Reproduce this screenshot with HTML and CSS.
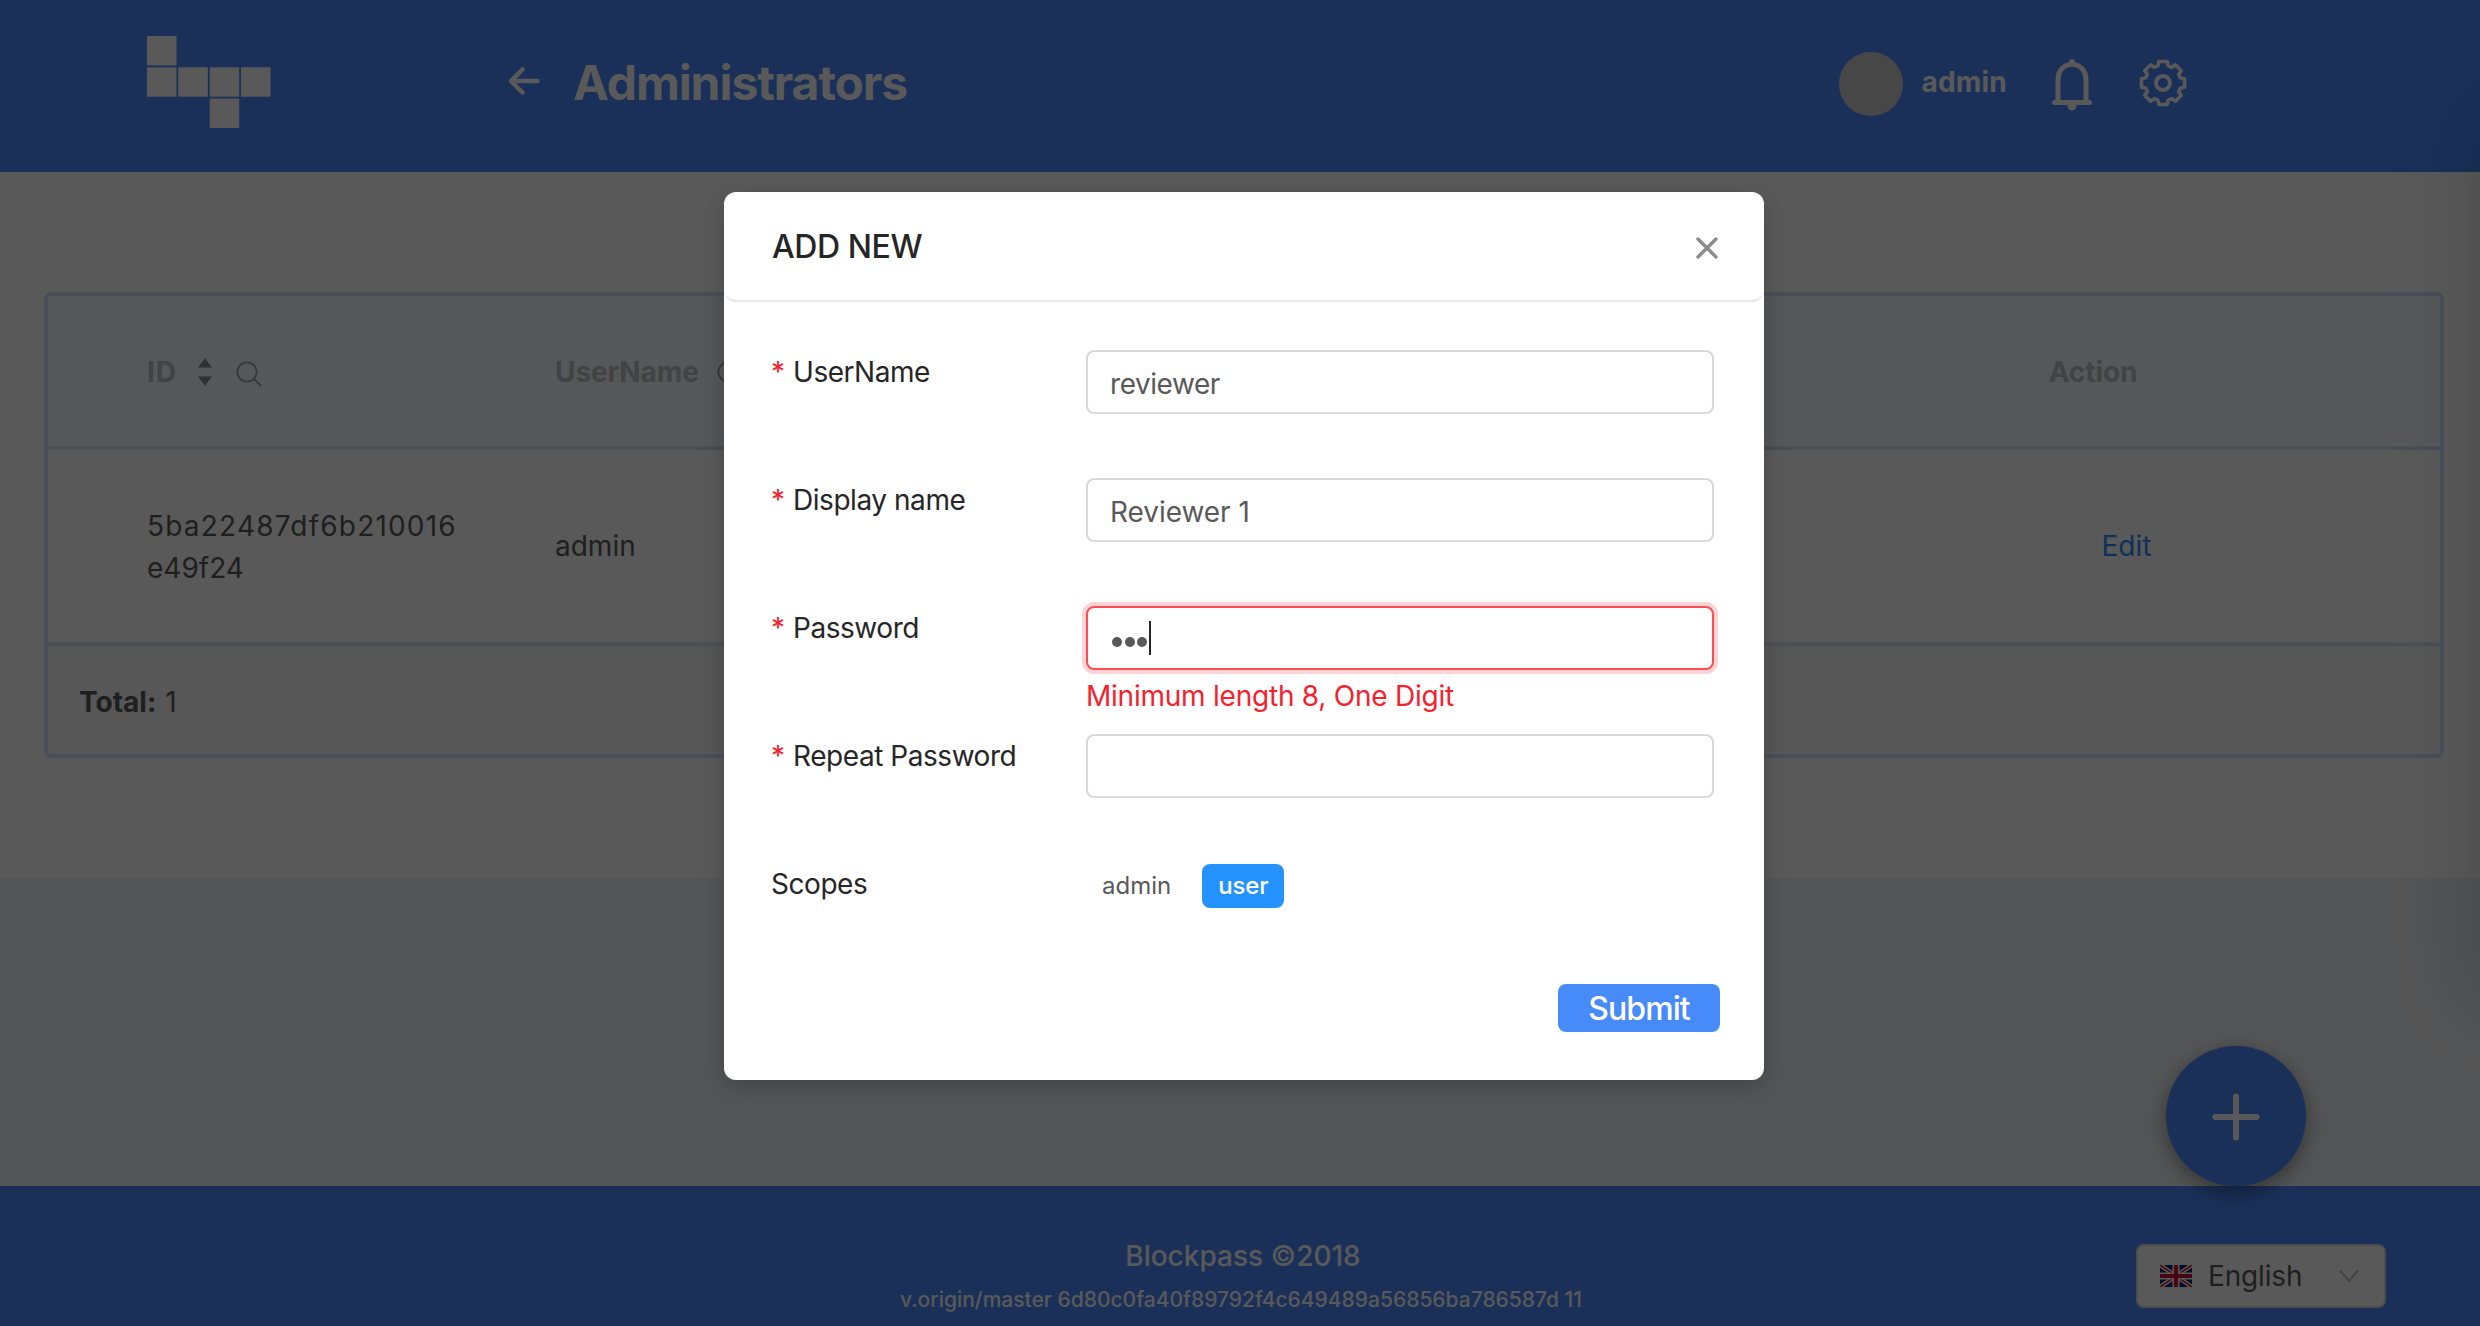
FILE: index.html
```
<!DOCTYPE html>
<html lang="en">
<head>
<meta charset="utf-8">
<title>Administrators</title>
<link rel="stylesheet" href="styles.css">
</head>
<body>
<div class="layout">
  <header class="header">
    <svg class="logo" width="124" height="92" viewBox="0 0 124 92" fill="#fff">
      <path d="M0 0h29.500v29.500H0zM0 31.300h29.500v29.500H0zM31.300 31.300h29.500v29.500H31.300zM62.700 31.300h29.500v29.500H62.700zM94 31.300h29.500v29.500H94zM62.700 62.500h29.500v29.500H62.700z"/>
    </svg>
    <svg class="back" width="32" height="28" viewBox="0 0 32 28" fill="none" stroke="#fff" stroke-width="4.500" stroke-linecap="round" stroke-linejoin="round">
      <path d="M14.500 2.500L3 14l11.500 11.500M4 14h25.500"/>
    </svg>
    <h1 class="page-title">Administrators</h1>
    <div class="user">
      <span class="avatar"></span>
      <span class="user-name">admin</span>
      <svg class="bell" width="40" height="52" viewBox="0 0 40 52">
        <path d="M6 42V21C6 11 12 5.500 20 5.500S34 11 34 21V42" fill="none" stroke="#fff" stroke-width="5"/>
        <path d="M2.500 43.500h35" stroke="#fff" stroke-width="5" stroke-linecap="round"/>
        <path d="M17 5V3a3 3 0 0 1 6 0v2zM15.500 45h9v2a4.500 4.500 0 0 1-9 0z" fill="#fff"/>
      </svg>
      <svg class="gear" width="48" height="48" viewBox="-24 -24 48 48" fill="none" stroke="#fff" stroke-width="3.600" stroke-linejoin="round">
        <circle r="7" stroke-width="4"/>
        <path d="M-4.200 -21.500H4.200L5.200 -17.200L8.800 -15.700L12.400 -18.200L18.200 -12.400L15.700 -8.800L17.200 -5.200L21.500 -4.200V4.200L17.200 5.200L15.700 8.800L18.200 12.400L12.400 18.200L8.800 15.700L5.200 17.200L4.200 21.500H-4.200L-5.200 17.200L-8.800 15.700L-12.400 18.200L-18.200 12.400L-15.700 8.800L-17.200 5.200L-21.500 4.200V-4.200L-17.200 -5.200L-15.700 -8.800L-18.200 -12.400L-12.400 -18.200L-8.800 -15.700L-5.200 -17.200Z"/>
      </svg>
    </div>
  </header>

  <main class="content">
    <section class="table">
      <div class="row head">
        <div class="cell id"><span class="id-title">ID</span>
          <svg class="sorter" width="14" height="28" viewBox="0 0 14 28" fill="#85888c"><path d="M7 0l7 9.500H0zM7 28l7-9.500H0z"/></svg>
          <svg class="search" width="26" height="26" viewBox="0 0 26 26" fill="none" stroke="#9a9da1" stroke-width="1.800"><circle cx="11" cy="11" r="9.700"/><path d="M18 18l7 7"/></svg>
        </div>
        <div class="cell name"><span>UserName</span>
          <svg class="search" width="26" height="26" viewBox="0 0 26 26" fill="none" stroke="#9a9da1" stroke-width="1.800"><circle cx="11" cy="11" r="9.700"/><path d="M18 18l7 7"/></svg>
        </div>
        <div class="cell action">Action</div>
      </div>
      <div class="row item">
        <div class="cell id"><div><span class="hash">5ba22487df6b210016</span><br>e49f24</div></div>
        <div class="cell name">admin</div>
        <div class="cell action"><a class="edit">Edit</a></div>
      </div>
      <div class="total"><b>Total:</b> 1</div>
    </section>
  </main>

  <div class="spacer"></div>

  <footer class="footer">
    <div class="copy">
      <div class="brand">Blockpass ©2018</div>
      <div class="version">v.origin/master 6d80c0fa40f89792f4c649489a56856ba786587d 11</div>
    </div>
    <div class="language">
      <svg class="flag" width="32" height="22" viewBox="0 0 32 22">
        <rect width="32" height="22" fill="#00247d"/>
        <path d="M0 0L32 22M32 0L0 22" stroke="#fff" stroke-width="4.400"/>
        <path d="M0 0L32 22M32 0L0 22" stroke="#cf142b" stroke-width="1.600"/>
        <path d="M16 0V22M0 11H32" stroke="#fff" stroke-width="7"/>
        <path d="M16 0V22M0 11H32" stroke="#cf142b" stroke-width="4"/>
      </svg>
      <span class="language-name">English</span>
      <svg width="20" height="14" viewBox="0 0 20 14" fill="none" stroke="#bfbfbf" stroke-width="2"><path d="M1 1.500l9 10.500 9-10.500"/></svg>
    </div>
  </footer>
</div>

<button class="fab">
  <svg width="48" height="48" viewBox="0 0 48 48" stroke="#fff" stroke-width="6" stroke-linecap="round"><path d="M24 3.500V44.500M3.500 24H44.500"/></svg>
</button>

<div class="drawer"></div>
<div class="mask"></div>

<div class="modal">
  <div class="modal-header">
    <span>ADD NEW</span>
    <svg width="22" height="22" viewBox="0 0 22 22" stroke="#8c8c8c" stroke-width="3.400" stroke-linecap="round"><path d="M2 2l18 18M20 2L2 20"/></svg>
  </div>
  <div class="modal-body">
    <div class="field"><label class="label required">UserName</label><div class="input">reviewer</div></div>
    <div class="field"><label class="label required">Display name</label><div class="input wide">Reviewer 1</div></div>
    <div class="field"><label class="label required">Password</label>
      <div>
        <div class="input error"><i class="dot"></i><i class="dot"></i><i class="dot"></i><i class="caret"></i></div>
        <div class="message">Minimum length 8, One Digit</div>
      </div>
    </div>
    <div class="field"><label class="label required">Repeat Password</label><div class="input"></div></div>
    <div class="field scopes"><label class="label">Scopes</label>
      <div class="chips"><span class="chip">admin</span><span class="chip checked">user</span></div>
    </div>
    <div class="actions"><button class="submit">Submit</button></div>
  </div>
</div>
</body>
</html>
```
FILE: styles.css
```
* { box-sizing: border-box; }
body {
  margin: 0;
  position: relative;
  height: 1326px;
  overflow: hidden;
  font: 400 28px/42px Inter, "Open Sans", sans-serif;
  color: #595959;
  background: #f0f2f5;
}
svg { display: block; flex: none; }
button { border: 0; padding: 0; font-family: inherit; }

.layout { display: flex; flex-direction: column; height: 1326px; }

/* header */
.header {
  display: flex;
  align-items: center;
  height: 172px;
  padding: 0 293px 8px 147px;
  background: #4a89fb;
  color: #fff;
}
.back { margin-left: 237px; margin-bottom: 2px; }
.page-title {
  margin: 2px 0 0 33px;
  font-size: 48px;
  line-height: 60px;
  font-weight: 700;
  letter-spacing: -1.05px;
}
.user { display: flex; align-items: center; margin-left: auto; }
.avatar { width: 64px; height: 64px; margin-top: 4px; border-radius: 50%; background: #ccc; }
.user-name { margin-left: 19px; font-weight: 700; letter-spacing: .2px; }
.bell { margin: 6px 0 0 45px; }
.gear { margin: 1px 0 0 47px; }

/* table */
.content { height: 706px; padding: 120px 36px 0 44px; background: #fff; }
.table { border: 4px solid #d0dfff; border-radius: 8px; overflow: hidden; }
.row { display: flex; }
.cell { display: flex; align-items: center; }
.cell.id { width: 406px; padding-left: 99px; }
.cell.name { flex: 1; padding-left: 101px; }
.cell.action { width: 622px; justify-content: center; }
.head {
  height: 154px;
  padding-top: 2px;
  border-bottom: 4px solid #d0dfff;
  background: #f6fafd;
  color: #bcbfc3;
  font-weight: 700;
  letter-spacing: -.1px;
}
.item { height: 194px; border-bottom: 2px solid #e8e8e8; }
.item .id { padding-top: 2px; }
.id-title { letter-spacing: 1px; }
.sorter { margin: 0 0 0 21px; }
.search { margin: 3px 0 0 24px; }
.cell.name .search { margin-left: 18px; }
.hash { letter-spacing: 1.2px; }
.head .action { padding-right: 72px; }
.item .action { padding-right: 0; }
.edit { margin-right: 5px; color: #2a8cff; }
.total {
  height: 110px;
  padding: 35px 0 0 31px;
  border-top: 2px solid #d0dfff;
  background: #fafafa;
}
.total b { margin-right: 1px; }

.spacer { flex: 1; }

/* footer */
.footer {
  display: flex;
  align-items: flex-start;
  height: 140px;
  padding-right: 94px;
  background: #4a89fb;
  color: #fff;
}
.copy { flex: 1; padding: 49px 0 0 346px; text-align: center; font-weight: 500; letter-spacing: 0; }
.brand { position: relative; left: 2px; }
.version { margin-top: 2px; font-size: 21px; letter-spacing: 0; line-height: 42px; }
.language {
  display: flex;
  align-items: center;
  width: 250px;
  height: 64px;
  margin-top: 58px;
  padding: 0 25px 0 22px;
  border: 2px solid #d9d9d9;
  border-radius: 8px;
  background: #fff;
  color: #595959;
}
.language-name { flex: 1; margin-left: 16px; letter-spacing: -.15px; }

.fab {
  position: absolute;
  left: 2166px;
  top: 1046px;
  display: grid;
  place-items: center;
  width: 140px;
  height: 140px;
  padding-top: 2px;
  border-radius: 50%;
  background: #4a89fb;
  box-shadow: 0 6px 20px rgba(0, 0, 0, .4);
}

/* closed drawer, parked off the right edge */
.drawer {
  position: absolute;
  left: 2480px;
  top: 110px;
  width: 100px;
  height: 890px;
  box-shadow: 0 0 90px rgba(0, 0, 0, .18);
}
.mask { position: absolute; inset: 0; background: rgba(0, 0, 0, .65); }

/* dialog */
.modal {
  position: absolute;
  left: 724px;
  top: 192px;
  width: 1040px;
  height: 888px;
  border-radius: 12px;
  background: #fff;
  box-shadow: 0 8px 24px rgba(0, 0, 0, .2);
  color: #262626;
}
.modal-header {
  display: flex;
  align-items: center;
  justify-content: space-between;
  height: 110px;
  padding: 2px 46px 0 48px;
  border-bottom: 2px solid #e8e8e8;
  border-radius: 12px;
  font-size: 32px;
  font-weight: 500;
  letter-spacing: -.4px;
}
.modal-header svg { margin-top: 2px; }
.modal-body { padding: 48px 44px 0 47px; }
.field { display: grid; grid-template-columns: 315px 628px; align-items: start; height: 128px; }
.label { margin-top: 1px; letter-spacing: -.45px; }
.required::before {
  content: "*";
  display: inline-block;
  width: 22px;
  color: #f5222d;
  font-size: 28px;
  letter-spacing: 0;
}
.input {
  display: flex;
  align-items: center;
  height: 64px;
  padding: 4px 22px 0;
  border: 2px solid #d9d9d9;
  border-radius: 8px;
  color: #595959;
  letter-spacing: -.45px;
}
.input.wide { letter-spacing: -.05px; }
.input.error { padding: 0 24px; border-color: #ff4d4f; box-shadow: 0 0 0 4px rgba(245, 34, 45, .2); }
.dot { width: 10px; height: 10px; margin: 7px 2.500px 0 0; border-radius: 50%; background: #595959; }
.caret { width: 2px; height: 34px; margin-left: -1px; background: #262626; }
.message { margin-top: 5px; color: #f5222d; letter-spacing: -.23px; }
.scopes .label { margin-top: 1px; }
.chips { display: flex; gap: 16px; padding: 2px 0 0 1px; font-size: 24px; }
.chip { height: 44px; padding: 0 15px; border-radius: 8px; line-height: 43px; color: #595959; }
.checked { padding: 0 16px; background: #2593ff; color: #fff; font-weight: 500; letter-spacing: -.15px; }
.actions { display: flex; justify-content: flex-end; margin-top: -6px; }
.submit {
  width: 162px;
  height: 48px;
  padding-top: 1px;
  border-radius: 8px;
  background: #478bfb;
  color: #fff;
  font-size: 32px;
  font-weight: 500;
  line-height: 48px;
  letter-spacing: -.9px;
}
```
